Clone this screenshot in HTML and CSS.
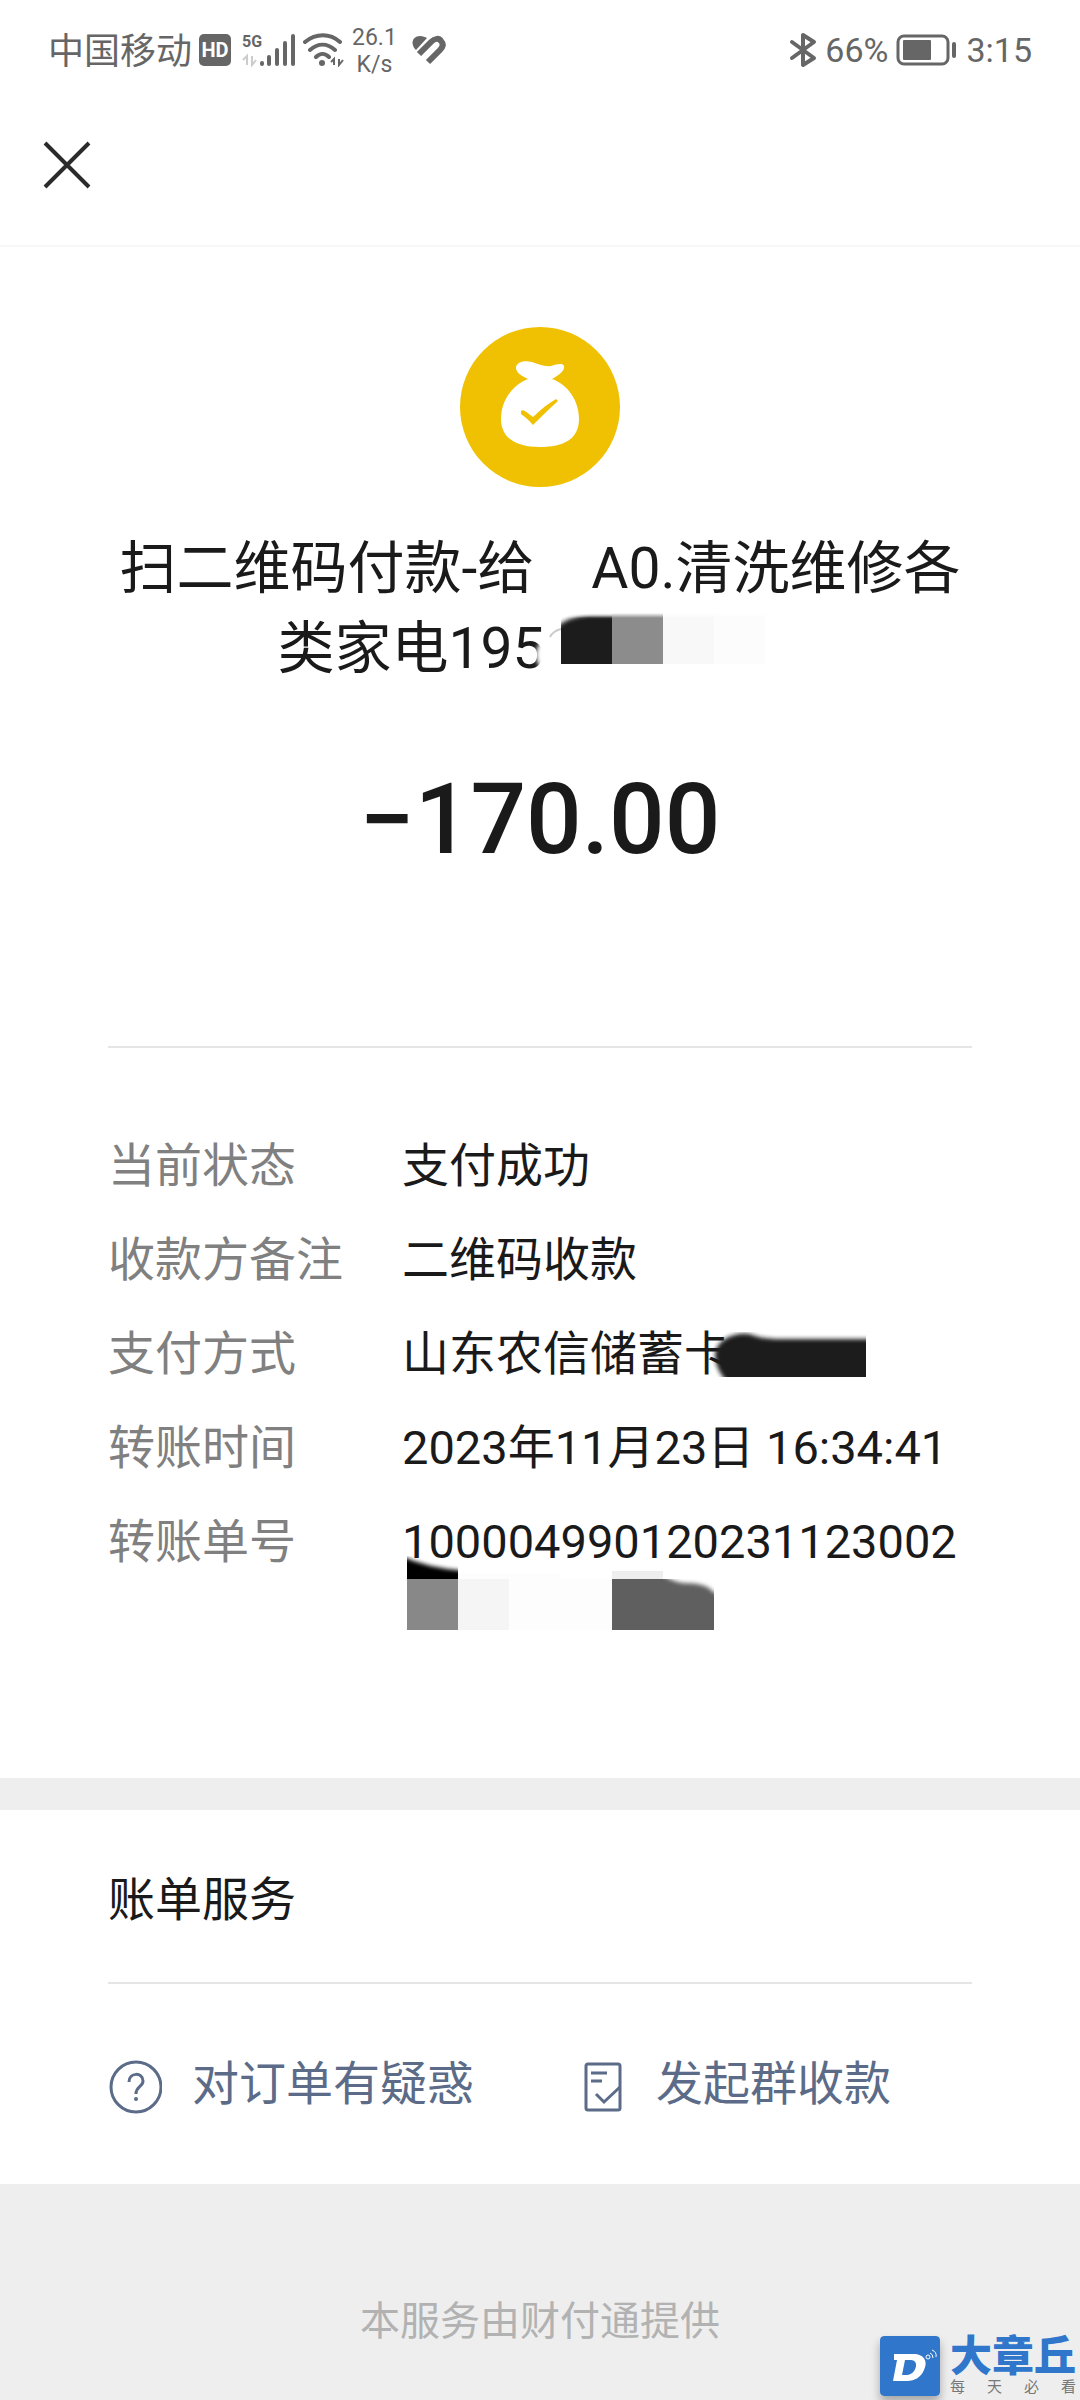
FILE: index.html
```html
<!DOCTYPE html>
<html lang="zh-CN">
<head>
    <meta charset="UTF-8">
    <meta name="viewport" content="width=device-width, initial-scale=1.0">
    <title>账单详情</title>
    <link rel="stylesheet" href="styles.css">
</head>
<body>
    <div class="status-bar">
        <div class="status-left">
            <span class="carrier">中国移动</span>
            <svg width="32" height="32" viewBox="0 0 32 32">
                <rect width="32" height="32" rx="5" fill="#666"/>
                <text x="16" y="23" class="hd-text">HD</text>
            </svg>
            <svg class="signal" width="54" height="34" viewBox="0 0 54 34">
                <text x="0" y="14" class="net-text">5G</text>
                <path d="M1 27l4-4v9M10 23v9l4-5" fill="none" stroke="#ccc" stroke-width="2"/>
                <path d="M20 30v1M27 24v7M35 17v14M43 10v21M51 3v28" fill="none" stroke="#666" stroke-width="4" stroke-linecap="round"/>
            </svg>
            <svg width="42" height="34" viewBox="0 0 42 34">
                <path d="M2 9C13 0 27 0 37 9M7 17c8-7 17-7 25 0M13 24c4-4 9-4 13 0" fill="none" stroke="#666" stroke-width="4" stroke-linecap="round"/>
                <circle cx="19" cy="30" r="3" fill="#666"/>
                <path d="M28 29l3-3v6M36 26v6l4-5" fill="none" stroke="#666" stroke-width="2"/>
            </svg>
            <span class="speed">26.1<br>K/s</span>
            <svg class="health" width="34" height="30" viewBox="0 0 34 30">
                <path d="M3 14C-2 8 1 1 8 1C11 1 13 2 15 3L4 15Z" fill="#666"/>
                <path d="M7 19L19 7C23 3 27 3 29 6C32 9 31 12 28 15L16 27" fill="none" stroke="#666" stroke-width="6"/>
            </svg>
        </div>
        <div class="status-right">
            <svg width="28" height="36" viewBox="0 0 28 36">
                <path d="M3 10L25 26L14 33V3L25 10L3 26" fill="none" stroke="#666" stroke-width="4" stroke-linecap="round" stroke-linejoin="round"/>
            </svg>
            <span>66%</span>
            <svg class="battery" width="62" height="32" viewBox="0 0 62 32">
                <rect x="2" y="2" width="50" height="28" rx="6" fill="none" stroke="#666" stroke-width="3"/>
                <rect x="7" y="6" width="28" height="20" rx="1" fill="#666"/>
                <path d="M58 10v12" stroke="#666" stroke-width="4" stroke-linecap="round"/>
            </svg>
            <span>3:15</span>
        </div>
    </div>

    <header class="nav">
        <button class="close" aria-label="关闭">
            <svg width="48" height="48" viewBox="0 0 48 48">
                <path d="M2 2L46 46M46 2L2 46" stroke="#2b2b2b" stroke-width="4"/>
            </svg>
        </button>
    </header>

    <main>
        <section class="summary">
            <svg width="162" height="162" viewBox="0 0 162 162">
                <circle cx="81" cy="81" r="80" fill="#efc102"/>
                <path d="M69 53C62 50 57 46 57 42C57 36 65 34 73 36C80 38 85 41 92 40C98 38 104 37 105 40C106 44 101 49 93 53C108 58 120 74 120 93C120 113 105 121 81 121C57 121 42 112 42 93C42 74 54 59 69 53Z" fill="#fff"/>
                <path d="M62 85C64 83 67 86 74 91C82 83 90 77 97 73L99 75C90 83 82 91 74 99Q70 94 62 88Z" fill="#efc102"/>
            </svg>
            <h1>扫二维码付款-给　A0.清洗维修各类家电195<svg class="mask-title" width="272" height="60" viewBox="-14 -4 272 60">
                    <defs>
                        <linearGradient id="fade" x1="0" y1="0" x2="0" y2="1">
                            <stop offset="0" stop-color="#fff"/>
                            <stop offset="1" stop-color="#fff" stop-opacity="0"/>
                        </linearGradient>
                        <filter id="soft" x="-20%" y="-20%" width="140%" height="140%">
                            <feGaussianBlur stdDeviation="2"/>
                        </filter>
                        <clipPath id="title-clip"><path d="M16 0h52v51H16z"/></clipPath>
                    </defs>
                    <ellipse cx="0" cy="42" rx="9" ry="14" fill="#fff" filter="url(#soft)"/>
                    <path d="M5 24Q8 18 16 16" fill="none" stroke="#ccc" stroke-width="2"/>
                    <g clip-path="url(#title-clip)">
                        <path d="M8 16Q24 3 44 2H80V60H8Z" fill="#1c1c1c" filter="url(#soft)"/>
                    </g>
                    <path d="M67 0h51v51H67z" fill="#8c8c8c"/>
                    <path d="M118 0h51v51h-51z" fill="#f8f8f8"/>
                    <path d="M169 0h51v51h-51z" fill="#fcfcfc"/>
                    <path d="M16 0h204v5H16z" fill="url(#fade)"/>
                </svg></h1>
            <p class="amount">−170.00</p>
        </section>

        <dl class="details">
            <dt>当前状态</dt>
            <dd>支付成功</dd>
            <dt>收款方备注</dt>
            <dd>二维码收款</dd>
            <dt>支付方式</dt>
            <dd>山东农信储蓄卡<svg class="mask-card" width="156" height="52" viewBox="0 4 156 52">
                    <clipPath id="card-clip"><path d="M0 0h155v49H0z"/></clipPath>
                    <g clip-path="url(#card-clip)">
                        <path d="M4 26C6 12 22 4 38 6Q52 11 64 11H166V60H22Q4 44 4 26Z" fill="#1c1c1c" filter="url(#soft)"/>
                    </g>
                </svg></dd>
            <dt>转账时间</dt>
            <dd>2023年11月23日 16:34:41</dd>
            <dt>转账单号</dt>
            <dd>100004990120231123002
                <svg class="mask-number" width="308" height="75" viewBox="0 0 308 75">
                    <clipPath id="edge-clip"><path d="M0 0h51v23H0z"/></clipPath>
                    <clipPath id="end-clip"><path d="M205 23h102v51H205z"/></clipPath>
                    <g clip-path="url(#edge-clip)">
                        <path d="M-10-2Q18 12 60 15V40H-10Z" filter="url(#soft)"/>
                    </g>
                    <path d="M0 23h51v51H0z" fill="#888"/>
                    <path d="M51 17h102v6H51zM153 23h52v51h-52z" fill="#fdfdfd"/>
                    <path d="M51 23h51v51H51z" fill="#f5f5f5"/>
                    <path d="M102 23h51v51h-51z" fill="#fdfdfd"/>
                    <path d="M205 15h51v8h-51z" fill="#eee"/>
                    <g clip-path="url(#end-clip)">
                        <path d="M190 10H245Q262 26 276 27Q300 27 306 36L320 40V90H190Z" fill="#5e5e5e" filter="url(#soft)"/>
                    </g>
                </svg>
            </dd>
        </dl>

        <section class="services">
            <h2>账单服务</h2>
            <div class="service-links">
                <a href="#">
                    <svg width="54" height="54" viewBox="0 0 54 54">
                        <circle cx="28" cy="27" r="25" fill="none" stroke="#5b6b88" stroke-width="3"/>
                        <path d="M21 22C21 12 35 12 35 21C35 27 28 26 28 34" fill="none" stroke="#5b6b88" stroke-width="3"/>
                        <circle cx="28" cy="39" r="2" fill="#5b6b88"/>
                    </svg>
                    对订单有疑惑
                </a>
                <a href="#">
                    <svg width="44" height="50" viewBox="0 0 44 50">
                        <rect x="4" y="2" width="34" height="46" rx="2" fill="none" stroke="#5b6b88" stroke-width="3"/>
                        <path d="M9 11H25M9 19H20M14 32L22 40L38 25" fill="none" stroke="#5b6b88" stroke-width="3"/>
                    </svg>
                    发起群收款
                </a>
            </div>
        </section>
    </main>

    <footer>本服务由财付通提供</footer>

    <div class="watermark">
        <svg class="watermark-logo" width="60" height="60" viewBox="0 0 60 60">
            <rect width="60" height="60" rx="4" fill="#3076cb"/>
            <path fill-rule="evenodd" d="M14 18H33C45 18 48 26 44 34C41 41 35 45 27 45H13L17 24H14ZM25 24L22 39H27C36 39 40 24 31 24Z" fill="#fff"/>
            <circle cx="48" cy="21" r="2" fill="none" stroke="#fff" stroke-width="1"/>
            <path d="M50 17Q53 18 53 22M52 14Q57 16 56 21" fill="none" stroke="#fff" stroke-width="1"/>
        </svg>
        <div class="watermark-text">
            <strong>大章丘</strong>
            <div class="slogan"><span>每</span><span>天</span><span>必</span><span>看</span></div>
        </div>
    </div>
</body>
</html>
```
FILE: styles.css
```css
* {
    box-sizing: border-box;
}
body {
    font-family: Roboto, "Noto Sans CJK SC", sans-serif;
    background-color: #eee;
    color: #1a1a1a;
    margin: 0;
    display: flex;
    flex-direction: column;
    min-height: 100vh;
    position: relative;
}
svg {
    flex-shrink: 0;
}
.status-bar {
    display: flex;
    justify-content: space-between;
    align-items: center;
    height: 100px;
    padding: 0 48px;
    background-color: #fff;
    color: #666;
    font-size: 34px;
}
.status-left,
.status-right {
    display: flex;
    align-items: center;
    gap: 8px;
}
.status-left {
    gap: 7px;
}
.carrier {
    padding-top: 4px;
    font-size: 36px;
    line-height: 40px;
}
.signal {
    margin-left: 4px;
}
.speed {
    padding-top: 2px;
    font-size: 23px;
    line-height: 27px;
    text-align: center;
}
.health {
    margin-left: 8px;
}
.hd-text {
    font-size: 20px;
    font-weight: bold;
    fill: #fff;
    text-anchor: middle;
}
.net-text {
    font-size: 16px;
    font-weight: bold;
    fill: #666;
}
.nav {
    display: flex;
    align-items: center;
    height: 147px;
    padding: 0 43px 16px;
    background-color: #fff;
    border-bottom: 2px solid #f7f7f7;
}
.close {
    display: flex;
    padding: 0;
    border: none;
    background: none;
    cursor: pointer;
}
main {
    background-color: #fff;
}
.summary {
    display: flex;
    flex-direction: column;
    align-items: center;
    margin: 0 108px;
    padding: 79px 0 166px;
    border-bottom: 2px solid #e5e5e5;
    text-align: center;
}
h1 {
    margin: 41px 0 0;
    font-size: 57px;
    font-weight: normal;
    line-height: 80px;
}
.mask-title {
    margin-left: -14px;
    vertical-align: top;
}
.amount {
    margin: 71px 0 0;
    font-size: 98px;
    font-weight: 500;
    line-height: 120px;
}
.details {
    display: grid;
    grid-template-columns: 294px 1fr;
    row-gap: 34px;
    margin: 0;
    padding: 88px 108px 147px;
    font-size: 47px;
    line-height: 60px;
}
.details dt {
    color: #808080;
}
.details dd {
    margin: 0;
    white-space: nowrap;
}
.mask-card {
    margin-left: -20px;
    vertical-align: middle;
}
.mask-number {
    display: block;
    margin: -16px 0 0 5px;
}
.services {
    border-top: 32px solid #eee;
    padding: 0 108px;
}
h2 {
    margin: 0;
    padding: 60px 0 52px;
    border-bottom: 2px solid #e5e5e5;
    font-size: 47px;
    font-weight: normal;
    line-height: 60px;
}
.service-links {
    display: flex;
    gap: 108px;
    padding: 70px 0;
}
.service-links a {
    display: flex;
    align-items: center;
    gap: 30px;
    color: #5b6b88;
    font-size: 47px;
    line-height: 60px;
    text-decoration: none;
}
.service-links svg {
    margin-top: 6px;
}
footer {
    padding: 108px 0 48px;
    color: #b2b2b2;
    font-size: 40px;
    line-height: 60px;
    text-align: center;
}
.watermark {
    position: absolute;
    right: 4px;
    bottom: 4px;
    display: flex;
    align-items: center;
    gap: 10px;
}
.watermark-logo {
    border-radius: 4px;
    box-shadow: 0 6px 10px rgba(0,0,0,0.3);
}
.watermark-text strong {
    display: block;
    color: #3076cb;
    font-size: 42px;
    font-weight: 900;
    line-height: 42px;
}
.slogan {
    display: flex;
    justify-content: space-between;
    color: #777;
    font-size: 15px;
    line-height: 18px;
}
```
